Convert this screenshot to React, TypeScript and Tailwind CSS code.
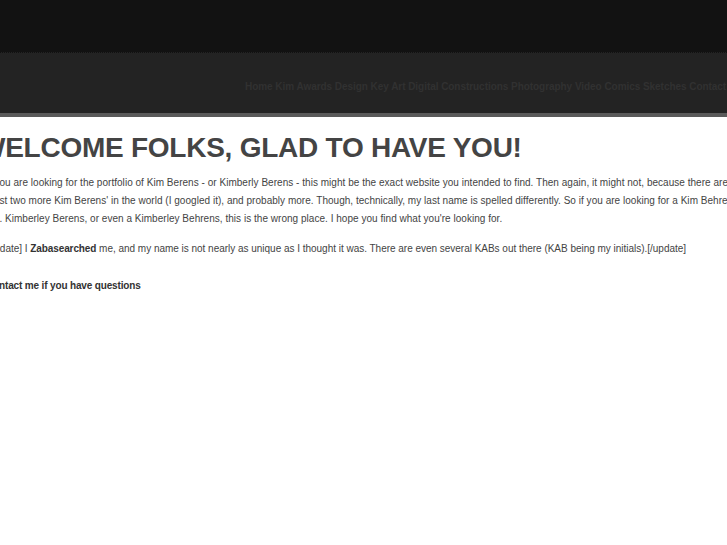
const navItems = [
  "Home",
  "Kim",
  "Awards",
  "Design",
  "Key Art",
  "Digital Constructions",
  "Photography",
  "Video",
  "Comics",
  "Sketches",
  "Contact",
];

export default function App() {
  return (
    <div className="w-[727px] h-[545px] overflow-hidden bg-white font-['Liberation_Sans',Arial,sans-serif]">
      {/* top strip */}
      <div className="h-[52px] bg-[#121212]" />

      {/* nav band */}
      <div className="h-[61px] bg-[#232323] border-t border-dotted border-[#111]">
        <nav className="pt-[28px] pl-[245px] whitespace-nowrap text-[10px] leading-[12px] font-bold text-[#313131] tracking-[-0.05px]">
          {navItems.map((item, i) => (
            <span key={item}>
              <a href="#">{item}</a>
              {i < navItems.length - 1 ? " " : ""}
            </span>
          ))}
        </nav>
      </div>
      <div className="h-[4px] bg-[#5a5a5a]" />

      {/* content */}
      <div className="ml-[-14px] w-[780px] text-[#444] whitespace-nowrap">
        <h1 className="mt-[15px] ml-[-7px] text-[28px] leading-[32px] font-bold text-[#444] tracking-[-0.25px]">
          WELCOME FOLKS, GLAD TO HAVE YOU!
        </h1>
        <p className="mt-[10px] text-[10px] leading-[18px] tracking-[0.03px]">
          If you are looking for the portfolio of Kim Berens - or Kimberly Berens - this might be the exact website you intended to find. Then again, it might not, because there are at
          <br />
          least two more Kim Berens' in the world (I googled it), and probably more. Though, technically, my last name is spelled differently. So if you are looking for a Kim Behrens, a
          <br />
          KB. Kimberley Berens, or even a Kimberley Behrens, this is the wrong place. I hope you find what you're looking for.
        </p>
        <p className="mt-[12px] text-[10px] leading-[18px] tracking-[-0.02px]">
          [update] I <strong className="text-[#333] tracking-[-0.1px]">Zabasearched</strong> me, and my name is not nearly as unique as I thought it was. There are even several KABs out there (KAB being my initials).[/update]
        </p>
        <p className="mt-[19px] text-[10px] leading-[18px] font-bold text-[#333] tracking-[-0.15px]">
          Contact me if you have questions
        </p>
      </div>
    </div>
  );
}
